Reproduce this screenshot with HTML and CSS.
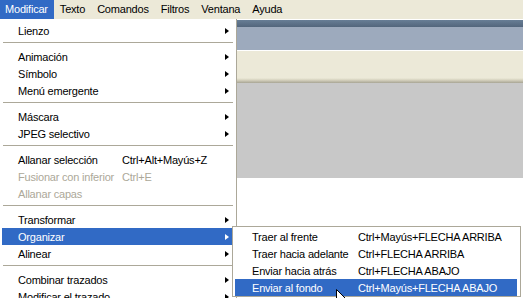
FILE: index.html
```html
<!DOCTYPE html>
<html lang="es">
<head>
    <meta charset="UTF-8">
    <title>Modificar</title>
    <link rel="stylesheet" href="styles.css">
</head>
<body>
    <nav class="menubar">
        <span class="menubar-item active">Modificar</span>
        <span class="menubar-item">Texto</span>
        <span class="menubar-item">Comandos</span>
        <span class="menubar-item">Filtros</span>
        <span class="menubar-item">Ventana</span>
        <span class="menubar-item">Ayuda</span>
    </nav>

    <div class="workspace">
        <div class="edge"></div>
        <div class="panel-title"></div>
        <div class="panel-body"></div>
        <div class="toolbar"></div>
        <div class="canvas"></div>

        <!-- Modificar dropdown -->
        <div class="menu main-menu">
            <div class="menu-item"><span class="label">Lienzo</span><span class="key"></span><span class="arrow"></span></div>
            <div class="separator"></div>
            <div class="menu-item"><span class="label">Animación</span><span class="key"></span><span class="arrow"></span></div>
            <div class="menu-item"><span class="label">Símbolo</span><span class="key"></span><span class="arrow"></span></div>
            <div class="menu-item"><span class="label">Menú emergente</span><span class="key"></span><span class="arrow"></span></div>
            <div class="separator"></div>
            <div class="menu-item"><span class="label">Máscara</span><span class="key"></span><span class="arrow"></span></div>
            <div class="menu-item"><span class="label">JPEG selectivo</span><span class="key"></span><span class="arrow"></span></div>
            <div class="separator"></div>
            <div class="menu-item"><span class="label">Allanar selección</span><span class="key">Ctrl+Alt+Mayús+Z</span></div>
            <div class="menu-item disabled"><span class="label">Fusionar con inferior</span><span class="key">Ctrl+E</span></div>
            <div class="menu-item disabled"><span class="label">Allanar capas</span><span class="key"></span></div>
            <div class="separator"></div>
            <div class="menu-item"><span class="label">Transformar</span><span class="key"></span><span class="arrow"></span></div>
            <div class="menu-item selected"><span class="label">Organizar</span><span class="key"></span><span class="arrow"></span></div>
            <div class="menu-item"><span class="label">Alinear</span><span class="key"></span><span class="arrow"></span></div>
            <div class="separator"></div>
            <div class="menu-item"><span class="label">Combinar trazados</span><span class="key"></span><span class="arrow"></span></div>
            <div class="menu-item"><span class="label">Modificar el trazado</span><span class="key"></span><span class="arrow"></span></div>
        </div>

        <!-- Organizar submenu -->
        <div class="menu sub-menu">
            <div class="menu-item"><span class="label">Traer al frente</span><span class="key">Ctrl+Mayús+FLECHA ARRIBA</span></div>
            <div class="menu-item"><span class="label">Traer hacia adelante</span><span class="key">Ctrl+FLECHA ARRIBA</span></div>
            <div class="menu-item"><span class="label">Enviar hacia atrás</span><span class="key">Ctrl+FLECHA ABAJO</span></div>
            <div class="menu-item selected"><span class="label">Enviar al fondo</span><span class="key">Ctrl+Mayús+FLECHA ABAJO</span></div>
        </div>

        <svg class="cursor" width="12" height="20" viewBox="0 0 12 20">
            <path d="M0.5 0.5 L0.5 16.5 L4.5 12.5 L7.5 18.5 L9.5 17.5 L6.5 11.5 L11.5 11.5 Z" fill="#fff" stroke="#000" stroke-width="1"/>
        </svg>
    </div>
</body>
</html>
```

FILE: styles.css
```css
* {
    margin: 0;
    padding: 0;
    box-sizing: border-box;
}

body {
    font-family: Tahoma, "Liberation Sans", Arial, sans-serif;
    font-size: 11px;
    letter-spacing: -0.2px;
    color: #000;
    background: #fff;
    width: 523px;
    height: 298px;
    overflow: hidden;
}

/* menu bar */
.menubar {
    display: flex;
    height: 19px;
    background: #ece9d8;
}

.menubar-item {
    padding: 0 6px;
    line-height: 19px;
}

.menubar-item:first-child {
    padding-left: 5px;
}

.menubar-item.active {
    background: #316ac5;
    color: #fff;
}

/* background panels */
.workspace {
    position: relative;
    height: 279px;
}

.edge {
    height: 1px;
    background: #fff;
}

.panel-title {
    height: 7px;
    background: linear-gradient(#687e96, #53667c);
}

.panel-body {
    height: 24px;
    background: #9daabd;
    border-bottom: 1px solid #fff;
}

.toolbar {
    height: 32px;
    background: linear-gradient(#ece9d8 0, #ece9d8 27px, #d6d2bf 29px, #a8a594 32px);
}

.canvas {
    height: 95px;
    background: #c8c8c8;
}

/* menus */
.menu {
    position: absolute;
    background: #fff;
}

.main-menu {
    top: 0;
    left: 0;
    width: 237px;
    height: 290px;
    padding: 3px 2px 0;
    border-right: 1px solid #aca899;
}

.sub-menu {
    top: 207px;
    left: 232px;
    width: 289px;
    padding: 1px 3px 0 2px;
    border: 1px solid #aca899;
}

.menu-item {
    display: flex;
    align-items: center;
    height: 17px;
    padding-left: 16px;
    white-space: nowrap;
}

.main-menu .label {
    width: 104px;
}

.sub-menu .menu-item {
    padding-left: 17px;
}

.sub-menu .label {
    width: 106px;
}

.key {
    flex: 1;
}

.arrow {
    width: 0;
    height: 0;
    border-left: 4px solid #000;
    border-top: 3.5px solid transparent;
    border-bottom: 3.5px solid transparent;
    margin-right: 5px;
}

.menu-item.selected {
    background: #316ac5;
    color: #fff;
}

.menu-item.selected .arrow {
    border-left-color: #fff;
}

.menu-item.disabled {
    color: #aca899;
}

.separator {
    height: 1px;
    margin: 3px 1px 5px;
    background: #aca899;
}

.cursor {
    position: absolute;
    left: 336px;
    top: 270px;
}
```
